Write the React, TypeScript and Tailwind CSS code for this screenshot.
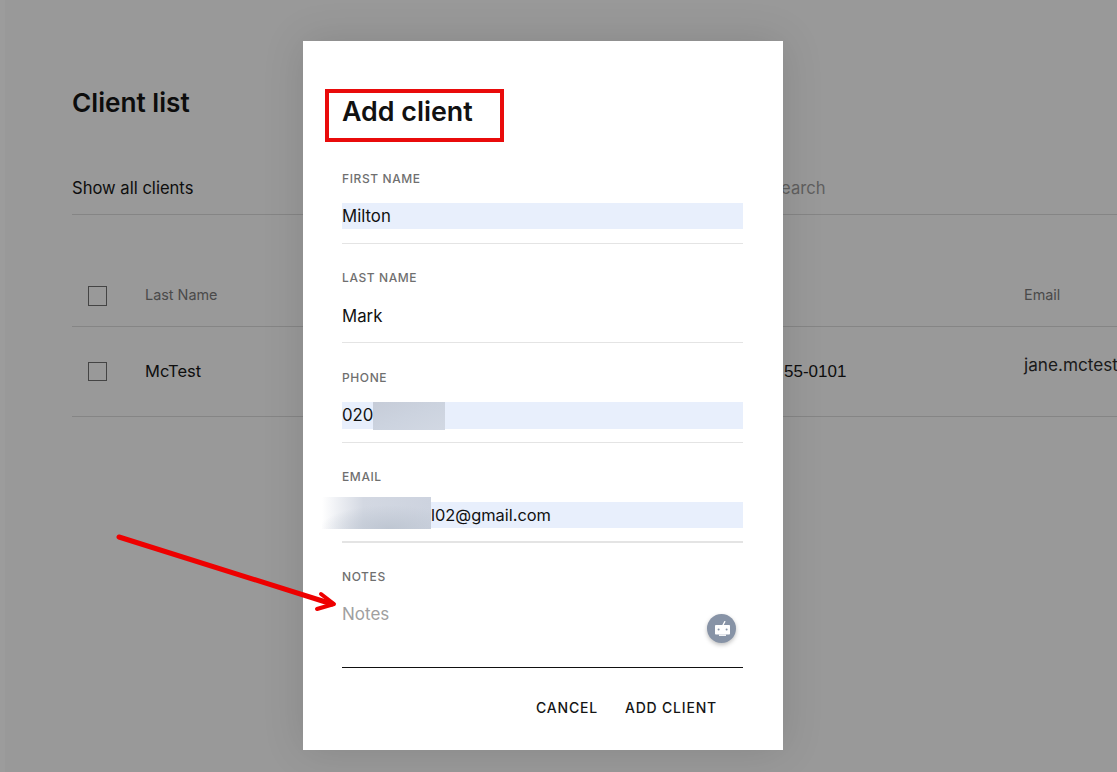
const font = "font-['Inter','Liberation_Sans',sans-serif]";

function Field({ label, value, filled, h, boxH = "h-[26px]", mt = "mt-[17px]", ruleMt = "mt-[14px]", rule = "h-px", children }: { label: string; value?: string; filled?: boolean; h: string; boxH?: string; mt?: string; ruleMt?: string; rule?: string; children?: React.ReactNode }) {
  return (
    <div className={`flex flex-col ${h}`}>
      <div className="h-4 text-[12px] leading-4 pt-px font-medium tracking-[0.6px] text-[#6f6f6f]">{label}</div>
      <div className={`${mt} ${boxH} text-[16.8px] leading-[26px] text-[#111] ${filled ? "bg-[#e8effc]" : ""}`}>
        {value}
        {children}
      </div>
      <div className={`${ruleMt} ${rule} bg-[#e4e4e4]`} />
    </div>
  );
}

function Check({ h }: { h: string }) {
  return <div className={`w-[19px] shrink-0 ${h} border border-[#444]`} />;
}

export default function App() {
  return (
    <div className={`relative h-[772px] w-[1117px] overflow-hidden border-l-[5px] border-[#9c9c9c] bg-[#999999] ${font}`}>
      <div className="flex flex-col pl-[67px] pt-[87px]">
        <h1 className="h-8 text-[26.2px] font-semibold leading-8 text-[#0c0c0c]">Client list</h1>
        <div className="mt-[57px] flex h-[39px] border-b border-[#858585] pb-2 text-[16.6px] leading-6 text-[#0e0e0e]">
          <span className="shrink-0">Show all clients</span>
          <span className="ml-[577px] shrink-0 text-[#5f5f5f]">Search</span>
        </div>
        <div className="mt-[62px] flex h-[50px] items-center border-b border-[#858585] pb-[11px] pl-4 text-[14.4px] text-[#4a4a4a]">
          <Check h="h-5" />
          <span className="-mt-[2px] ml-[38px] w-[879px] shrink-0">Last Name</span>
          <span className="-mt-[2px] shrink-0">Email</span>
        </div>
        <div className="flex h-[90px] items-center border-b border-[#858585] pl-4 text-[16.5px] text-[#0e0e0e]">
          <Check h="h-[19px]" />
          <span className="ml-[38px] w-[580px] shrink-0">McTest</span>
          <span className="w-[299px] shrink-0 whitespace-nowrap pl-[59px] font-['Liberation_Sans',sans-serif] text-[17px]">55-0101</span>
          <span className="-mt-[14px] shrink-0 whitespace-nowrap text-[17.2px] text-[#1a1a1a]">jane.mctest</span>
        </div>
      </div>

      <div className="absolute left-[298px] top-[41px] flex h-[709px] w-[480px] flex-col bg-white pl-[39px] pr-10 pt-[53px] shadow-[0_0_40px_rgba(0,0,0,0.12)]">
        <h2 className="h-[34px] text-[26.8px] font-semibold leading-[34px] text-[#111]">Add client</h2>
        <div className="mt-[42px] flex flex-col">
          <Field label="FIRST NAME" value="Milton" filled h="h-[99px]" />
          <Field label="LAST NAME" h="h-[100px]" mt="mt-[18px]" ruleMt="mt-[13px]">Mark</Field>
          <Field label="PHONE" value="020" filled h="h-[99px]" boxH="h-[27px]" ruleMt="mt-[13px]" />
          <Field label="EMAIL" filled h="h-[100px]" mt="mt-[18px]" ruleMt="mt-[13px]" rule="h-[2px]">
            <span className="ml-[89px] text-[16.4px]">l02@gmail.com</span>
          </Field>
          <div className="relative flex h-[100px] flex-col border-b border-[#111]">
            <div className="h-4 pt-px text-[12px] leading-4 font-medium tracking-[0.6px] text-[#6f6f6f]">NOTES</div>
            <div className="mt-[18px] text-[17px] leading-6 text-[#a0a0a0]">Notes</div>
            <div className="absolute left-[365px] top-[46px] flex h-[29px] w-[29px] items-center justify-center rounded-full bg-[#8793a6] shadow-[0_2px_4px_rgba(0,0,0,0.25)]">
              <svg width="20" height="20" viewBox="0 0 20 20" fill="none">
                <path d="M11 6 L12.8 2.6" stroke="#fff" strokeWidth="1.3" strokeLinecap="round" />
                <rect x="3" y="6" width="15" height="9.5" rx="0.8" fill="#fff" />
                <rect x="7" y="15.5" width="7" height="1.4" fill="#fff" />
                <circle cx="6.6" cy="10.6" r="1" fill="#8793a6" />
                <circle cx="14.6" cy="10.6" r="1" fill="#8793a6" />
              </svg>
            </div>
          </div>
        </div>
        <div className="mt-[30px] flex justify-end gap-[27px] pr-[26px] text-[14px] font-medium leading-5 tracking-[0.8px] text-[#151515]">
          <span>CANCEL</span>
          <span>ADD CLIENT</span>
        </div>
      </div>

      {/* Redaction smudges */}
      <div className="absolute left-[368px] top-[402px] h-[28px] w-[72px] bg-gradient-to-br from-[#c6ccd8] via-[#ccd3df] to-[#d2d8e3]" />
      <div className="absolute left-[317px] top-[497px] h-[32px] w-[109px] bg-[radial-gradient(ellipse_70px_24px_at_62%_100%,#bec6d2_0%,rgba(190,198,210,0)_100%),linear-gradient(90deg,#ffffff_0%,#eef0f4_14%,#d3d8e2_38%,#cdd3df_100%)]" />

      {/* Annotations */}
      <div className="absolute left-[320px] top-[89px] h-[53px] w-[179px] border-[4px] border-[#e90b0b]" />
      <svg className="absolute -left-[5px] top-0" width="1117" height="772" fill="none">
        <path d="M119 537 L332 604" stroke="#ee0000" strokeWidth="5" strokeLinecap="round" />
        <path d="M321 594 L334 604 L317 609" stroke="#ee0000" strokeWidth="4" strokeLinecap="round" strokeLinejoin="round" />
      </svg>
    </div>
  );
}
